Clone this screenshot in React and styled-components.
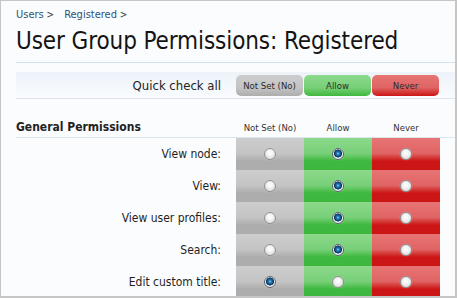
import React from "react";
import styled, { createGlobalStyle, css } from "styled-components";

const Global = createGlobalStyle`
  html, body { margin: 0; padding: 0; background: #ffffff; }
  body { font-family: "DejaVu Sans Condensed", "DejaVu Sans", sans-serif; }
  * { box-sizing: border-box; }
`;

const Frame = styled.div`
  width: 457px;
  height: 298px;
  overflow: hidden;
  border: 2px solid #c6c6c6;
  border-width: 1px 2px 2px 1px;
  background: #fbfcfe;
  padding: 7px 0 0 15px;
  color: #1a1a1a;
`;

const Breadcrumb = styled.nav`
  display: flex;
  gap: 10px;
  font-size: 11px;
  line-height: 14px;
  color: #2c5376;
`;

const Crumb = styled.span`
  &::after { content: " >"; color: #3a3a3a; font-size: 10px; }
`;

const Title = styled.h1`
  margin: 4px 0 0;
  padding: 0 0 6px;
  font-size: 24px;
  letter-spacing: -0.1px;
  font-weight: normal;
  line-height: 30px;
  color: #141414;
  border-bottom: 1px solid #d4e1ea;
`;

const Grid = styled.div`
  display: grid;
  grid-template-columns: 220px 68px 68px 68px 1fr;
`;

const QuickBar = styled(Grid)`
  margin-top: 9px;
  height: 27px;
  align-items: center;
  background: linear-gradient(to bottom, #ecf3f9 0%, #f4f8fc 60%, #f9fbfd 100%);
  border-bottom: 1px solid #dbe6ee;
`;

const QuickLabel = styled.div`
  text-align: right;
  padding-right: 15px;
  font-size: 13px;
  color: #222;
`;

const tones = {
  unset: { top: "#cdcdcd", mid: "#c4c4c4", bottom: "#adadad" },
  allow: { top: "#8cd98c", mid: "#78d078", bottom: "#3fb83f" },
  never: { top: "#e77474", mid: "#e06464", bottom: "#cc1515" },
};

const gradient = (t) => css`
  background: linear-gradient(
    to bottom,
    ${tones[t].top} 0%,
    ${tones[t].mid} 48%,
    ${tones[t].bottom} 72%,
    ${tones[t].bottom} 100%
  );
`;

const QuickButton = styled.div`
  height: 21px;
  margin-right: 1px;
  border-radius: 5px;
  display: flex;
  align-items: center;
  justify-content: center;
  font-size: 9.5px;
  color: #2a2a2a;
  ${({ $tone }) => css`
    background: linear-gradient(
      to bottom,
      ${tones[$tone].top} 0%,
      ${tones[$tone].mid} 60%,
      ${tones[$tone].bottom} 100%
    );
  `}
`;

const HeadRow = styled(Grid)`
  height: 39px;
  align-items: end;
  padding-bottom: 2px;
  border-bottom: 1px solid #dbe6ee;
`;

const SectionTitle = styled.div`
  font-size: 12px;
  font-weight: bold;
  color: #222;
  line-height: 16px;
`;

const ColHead = styled.div`
  text-align: center;
  font-size: 9.5px;
  color: #333;
  line-height: 14px;
`;

const Row = styled(Grid)`
  height: 32px;
`;

const Label = styled.div`
  text-align: right;
  padding-right: 15px;
  font-size: 12px;
  color: #1f1f1f;
  align-self: center;
`;

const Cell = styled.div`
  display: flex;
  align-items: center;
  justify-content: center;
  ${({ $tone }) => gradient($tone)}
`;

const Radio = styled.span`
  width: 12px;
  height: 12px;
  border-radius: 50%;
  border: 1px solid #8f8f8f;
  margin-top: -1px;
  box-shadow: 0 0 1px rgba(255, 255, 255, 0.6);
  background: radial-gradient(circle at 50% 40%, #ffffff 0%, #f3f3f3 35%, #d2d2d2 100%);
  ${({ $checked }) =>
    $checked &&
    css`
      border-color: #5d6670;
      background: radial-gradient(
        circle at 50% 45%,
        #7cc0ea 0px,
        #2474b0 1.6px,
        #0e4672 3.2px,
        #0b3558 3.8px,
        #f4f4f4 4.3px,
        #d4d4d4 100%
      );
    `}
`;

const rows = [
  { label: "View node:", value: "allow" },
  { label: "View:", value: "allow" },
  { label: "View user profiles:", value: "allow" },
  { label: "Search:", value: "allow" },
  { label: "Edit custom title:", value: "unset" },
];

const columns = [
  { key: "unset", label: "Not Set (No)" },
  { key: "allow", label: "Allow" },
  { key: "never", label: "Never" },
];

export default function App() {
  return (
    <>
      <Global />
      <Frame>
        <Breadcrumb>
          <Crumb>Users</Crumb>
          <Crumb>Registered</Crumb>
        </Breadcrumb>
        <Title>User Group Permissions: Registered</Title>
        <QuickBar>
          <QuickLabel>Quick check all</QuickLabel>
          {columns.map((c) => (
            <QuickButton key={c.key} $tone={c.key}>
              {c.label}
            </QuickButton>
          ))}
        </QuickBar>
        <HeadRow>
          <SectionTitle>General Permissions</SectionTitle>
          {columns.map((c) => (
            <ColHead key={c.key}>{c.label}</ColHead>
          ))}
        </HeadRow>
        {rows.map((r) => (
          <Row key={r.label}>
            <Label>{r.label}</Label>
            {columns.map((c) => (
              <Cell key={c.key} $tone={c.key}>
                <Radio $checked={r.value === c.key} />
              </Cell>
            ))}
          </Row>
        ))}
      </Frame>
    </>
  );
}
